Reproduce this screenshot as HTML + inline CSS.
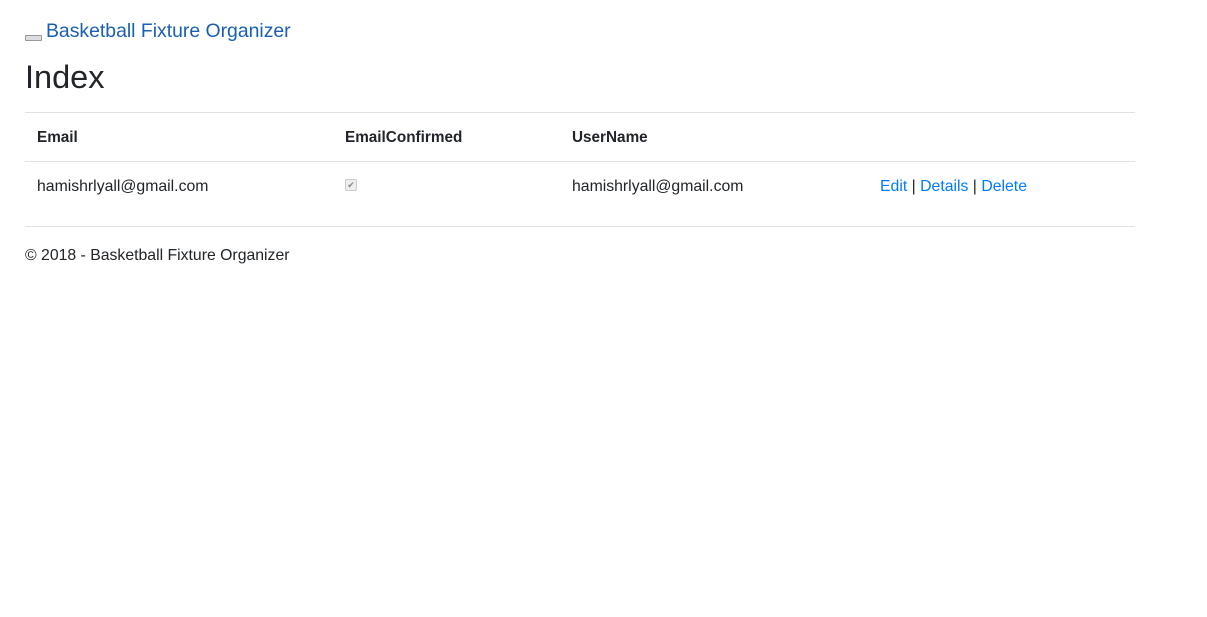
<!DOCTYPE html>
<html><head><meta charset="utf-8"><style>
body{margin:0;background:#fff;font-family:"Liberation Sans",sans-serif;color:#212529;font-size:15.8px;}
.a{position:absolute;white-space:nowrap;}
.l{color:#007bff;}
b{font-size:15.3px;}
</style></head><body>
<div class="a" style="left:25px;top:35px;width:15px;height:4px;border:1px solid #999;background:#ddd;border-radius:1px;"></div>
<div class="a" style="left:46px;top:20px;font-size:19.4px;color:#1a5fb4;">Basketball Fixture Organizer</div>
<div class="a" style="left:25px;top:59px;font-size:32.5px;">Index</div>
<div class="a" style="left:25px;top:112px;width:1110px;border-top:1px solid #dee2e6;"></div>
<div class="a" style="left:37px;top:129px;"><b>Email</b></div>
<div class="a" style="left:345px;top:129px;"><b>EmailConfirmed</b></div>
<div class="a" style="left:572px;top:129px;"><b>UserName</b></div>
<div class="a" style="left:25px;top:161px;width:1110px;border-top:1px solid #dee2e6;"></div>
<div class="a" style="left:37px;top:178px;">hamishrlyall@gmail.com</div>
<div class="a" style="left:345px;top:179px;width:10px;height:10px;border:1px solid #ccc;background:#eee;border-radius:2px;font-size:9px;line-height:10px;text-align:center;color:#888;">✔</div>
<div class="a" style="left:572px;top:178px;">hamishrlyall@gmail.com</div>
<div class="a" style="left:880px;top:178px;"><span class="l">Edit</span> | <span class="l">Details</span> | <span class="l">Delete</span></div>
<div class="a" style="left:25px;top:226px;width:1110px;border-top:1px solid #dee2e6;"></div>
<div class="a" style="left:25px;top:247px;">© 2018 - Basketball Fixture Organizer</div>
</body></html>
